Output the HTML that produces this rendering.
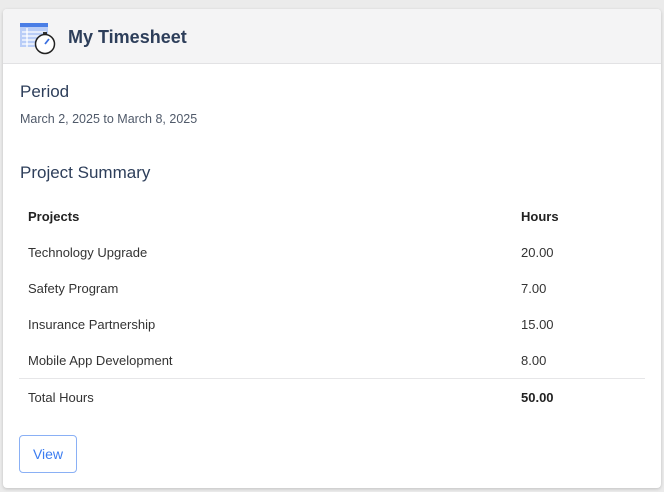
<!DOCTYPE html>
<html><head><style>
html,body{margin:0;padding:0;background:#ebebeb;width:664px;height:492px;overflow:hidden;font-family:"Liberation Sans",sans-serif;}
.card{position:absolute;left:3px;top:9px;width:658px;height:479px;background:#fff;border-radius:4px;box-shadow:0 1px 3px rgba(0,0,0,.18);overflow:hidden}
.hdr{height:54px;background:#f4f4f5;border-bottom:1px solid #e2e2e4;position:relative}
.a{position:absolute;white-space:nowrap}
</style></head><body>
<div class="card">
<div class="hdr">
<svg style="position:absolute;left:15px;top:13px" width="40" height="33" viewBox="0 0 40 33">
<rect x="2" y="1" width="28" height="4" fill="#4a7ee6"/>
<rect x="2" y="5" width="28" height="20" fill="#b9cdf7"/>
<g stroke="#fff" stroke-width="1.3"><line x1="4" y1="10" x2="28" y2="10"/><line x1="4" y1="14" x2="28" y2="14"/><line x1="4" y1="18" x2="28" y2="18"/><line x1="4" y1="22" x2="28" y2="22"/><line x1="9" y1="6" x2="9" y2="25"/></g>
<rect x="25" y="10" width="4" height="3" fill="#333"/>
<circle cx="27" cy="22" r="9.5" fill="#fff" stroke="#222" stroke-width="1.5"/>
<line x1="27" y1="22" x2="31" y2="17" stroke="#3a6fe0" stroke-width="1.8"/>
</svg>
<div class="a" style="left:65px;top:18px;font-size:18px;font-weight:bold;color:#2d3e5a">My Timesheet</div>
</div>
<div class="a" style="left:17px;top:73px;font-size:17px;color:#2d3e5a">Period</div>
<div class="a" style="left:17px;top:103px;font-size:12.5px;color:#505a6a">March 2, 2025 to March 8, 2025</div>
<div class="a" style="left:17px;top:154px;font-size:17px;color:#2d3e5a">Project Summary</div>
<div class="a" style="left:25px;top:200px;font-size:13px;font-weight:bold;color:#222">Projects</div>
<div class="a" style="left:518px;top:200px;font-size:13px;font-weight:bold;color:#222">Hours</div>
<div class="a" style="left:25px;top:236px;font-size:13px;color:#333">Technology Upgrade</div>
<div class="a" style="left:518px;top:236px;font-size:13px;color:#333">20.00</div>
<div class="a" style="left:25px;top:272px;font-size:13px;color:#333">Safety Program</div>
<div class="a" style="left:518px;top:272px;font-size:13px;color:#333">7.00</div>
<div class="a" style="left:25px;top:308px;font-size:13px;color:#333">Insurance Partnership</div>
<div class="a" style="left:518px;top:308px;font-size:13px;color:#333">15.00</div>
<div class="a" style="left:25px;top:344px;font-size:13px;color:#333">Mobile App Development</div>
<div class="a" style="left:518px;top:344px;font-size:13px;color:#333">8.00</div>
<div style="position:absolute;left:16px;top:369px;width:626px;height:1px;background:#e6e6e8"></div>
<div class="a" style="left:25px;top:381px;font-size:13px;color:#333">Total Hours</div>
<div class="a" style="left:518px;top:381px;font-size:13px;font-weight:bold;color:#222">50.00</div>
<div style="position:absolute;left:16px;top:426px;width:56px;height:36px;border:1px solid #8ab0f5;border-radius:4px;color:#3b7cf0;font-size:14px;line-height:36px;text-align:center">View</div>
</div>
</body></html>
